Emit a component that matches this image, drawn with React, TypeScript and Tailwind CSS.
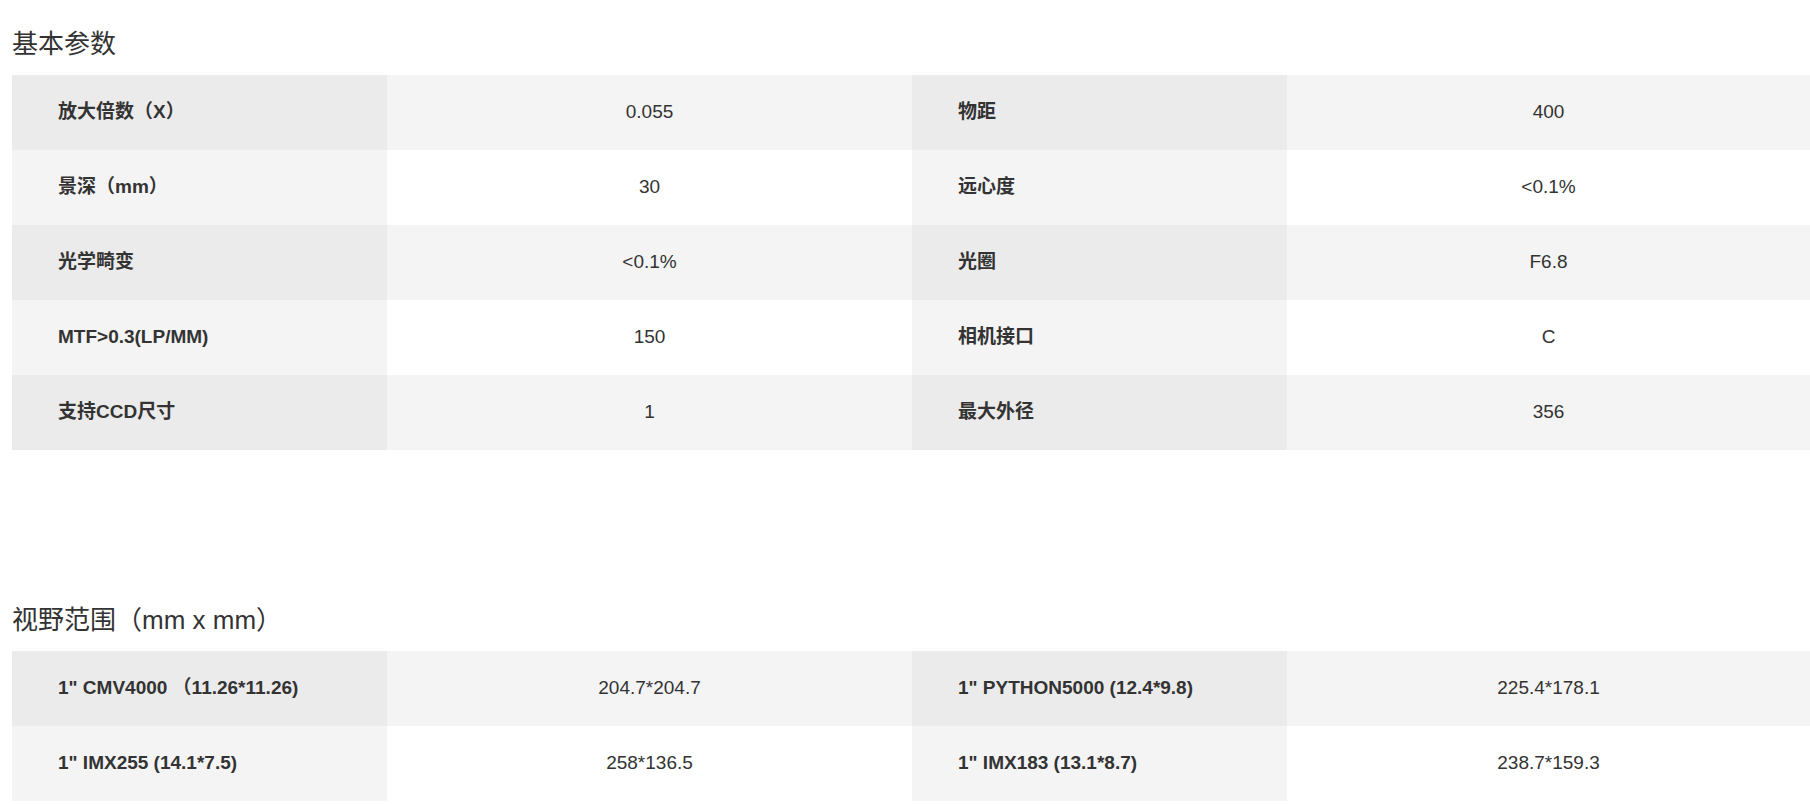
import React from "react";

const font = { fontFamily: '"Liberation Sans", Arial, "Noto Sans CJK SC", sans-serif' };

type Row = [string, string, string, string];

const basic: Row[] = [
  ["放大倍数（X）", "0.055", "物距", "400"],
  ["景深（mm）", "30", "远心度", "<0.1%"],
  ["光学畸变", "<0.1%", "光圈", "F6.8"],
  ["MTF>0.3(LP/MM)", "150", "相机接口", "C"],
  ["支持CCD尺寸", "1", "最大外径", "356"],
];

const fov: Row[] = [
  ['1" CMV4000 （11.26*11.26)', "204.7*204.7", '1" PYTHON5000 (12.4*9.8)', "225.4*178.1"],
  ['1" IMX255 (14.1*7.5)', "258*136.5", '1" IMX183 (13.1*8.7)', "238.7*159.3"],
];

function Table({ rows }: { rows: Row[] }) {
  return (
    <div className="flex flex-col w-[1798px]">
      {rows.map((r, i) => {
        const odd = i % 2 === 0;
        const labelBg = odd ? "bg-[#ebebeb]" : "bg-[#f4f4f4]";
        const valBg = odd ? "bg-[#f4f4f4]" : "bg-white";
        return (
          <div key={i} className="flex h-[75px] text-[19px] text-[#333]">
            <div className={`w-[375px] shrink-0 flex items-center pl-[46px] font-bold whitespace-pre ${labelBg}`}>{r[0]}</div>
            <div className={`w-[525px] shrink-0 flex items-center justify-center ${valBg}`}>{r[1]}</div>
            <div className={`w-[375px] shrink-0 flex items-center pl-[46px] font-bold whitespace-pre ${labelBg}`}>{r[2]}</div>
            <div className={`w-[523px] shrink-0 flex items-center justify-center ${valBg}`}>{r[3]}</div>
          </div>
        );
      })}
    </div>
  );
}

export default function App() {
  return (
    <div className="w-[1810px] h-[804px] overflow-hidden bg-white pl-[12px] [text-spacing-trim:space-all]" style={font}>
      <div className="pt-[28px] h-[75px]">
        <h2 className="text-[26px] leading-[32px] text-[#333] font-normal">基本参数</h2>
      </div>
      <Table rows={basic} />
      <div className="pt-[154px] h-[201px]">
        <h2 className="text-[26px] leading-[32px] text-[#333] font-normal">视野范围（mm x mm）</h2>
      </div>
      <Table rows={fov} />
    </div>
  );
}
